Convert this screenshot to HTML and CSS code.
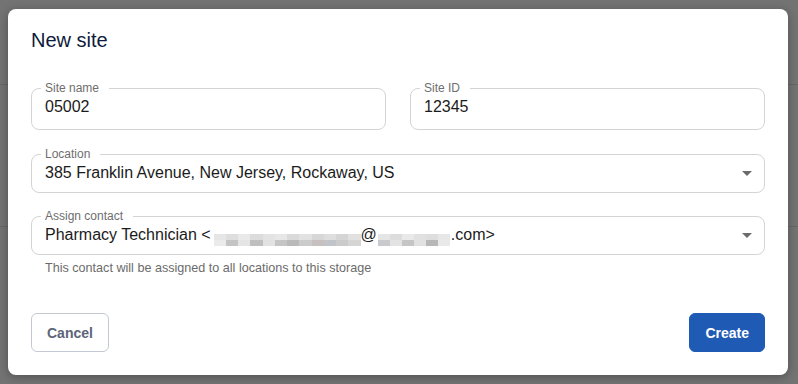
FILE: index.html
```html
<!DOCTYPE html>
<html lang="en">
<head>
<meta charset="utf-8">
<title>New site</title>
<link rel="stylesheet" href="styles.css">
</head>
<body>
<div class="dialog">
  <h2 class="title">New site</h2>
  <div class="row">
    <div class="field text">
      <span class="label">Site name</span>
      <span class="value">05002</span>
    </div>
    <div class="field text">
      <span class="label">Site ID</span>
      <span class="value">12345</span>
    </div>
  </div>
  <div class="field select loc">
    <span class="label">Location</span>
    <span class="value">385 Franklin Avenue, New Jersey, Rockaway, US</span>
    <svg class="arrow" width="10" height="5" viewBox="0 0 10 5"><path d="M0 0H10L5 5Z" fill="#6b6b6b"/></svg>
  </div>
  <div class="field select contact">
    <span class="label">Assign contact</span>
    <span class="value">Pharmacy Technician &lt;<span class="redact r12"><i style="background:#e6e6e6"></i><i style="background:#dedede"></i><i style="background:#e9e9e9"></i><i style="background:#dcdcdc"></i><i style="background:#e3e3e3"></i><i style="background:#e7e7e7"></i><i style="background:#dadada"></i><i style="background:#e2e2e2"></i><i style="background:#d7d7d7"></i><i style="background:#dedede"></i><i style="background:#d5d5d5"></i><i style="background:#e1e1e1"></i><i style="background:#ebebeb"></i><i style="background:#c4c4c4"></i><i style="background:#e5e5e5"></i><i style="background:#bfbfbf"></i><i style="background:#e2e2e2"></i><i style="background:#c5c5c5"></i><i style="background:#bababa"></i><i style="background:#cbcbcb"></i><i style="background:#c6c0c0"></i><i style="background:#c1c5c9"></i><i style="background:#cbcbcb"></i><i style="background:#d5d5d5"></i></span>@<span class="redact r6"><i style="background:#e5e5e5"></i><i style="background:#dddddd"></i><i style="background:#e9e9e9"></i><i style="background:#e1e1e1"></i><i style="background:#dedede"></i><i style="background:#e7e7e7"></i><i style="background:#c9c9ce"></i><i style="background:#e3e3e3"></i><i style="background:#c5c5c5"></i><i style="background:#e1e1e1"></i><i style="background:#b7b7b7"></i><i style="background:#e9e9e9"></i></span>.com&gt;</span>
    <svg class="arrow" width="10" height="5" viewBox="0 0 10 5"><path d="M0 0H10L5 5Z" fill="#6b6b6b"/></svg>
  </div>
  <p class="helper">This contact will be assigned to all locations to this storage</p>
  <div class="footer">
    <button class="btn cancel" type="button">Cancel</button>
    <button class="btn create" type="button">Create</button>
  </div>
</div>
</body>
</html>
```
FILE: styles.css
```css
html, body {
  margin: 0;
  padding: 0;
}
body {
  width: 798px;
  height: 384px;
  overflow: hidden;
  font-family: "Liberation Sans", Arial, sans-serif;
  background:
    linear-gradient(#666, #666) 0 84px / 100% 1px no-repeat,
    linear-gradient(#666, #666) 0 226px / 100% 1px no-repeat,
    #737373;
}
.dialog {
  box-sizing: border-box;
  width: 780px;
  height: 366px;
  margin: 9px 0 0 8px;
  padding: 19px 23px 23px;
  background: #fff;
  border-radius: 8px;
  box-shadow: 0 2px 10px rgba(0, 0, 0, 0.3);
  display: flex;
  flex-direction: column;
}
.title {
  margin: 0;
  font-size: 20px;
  line-height: 24px;
  font-weight: 400;
  color: #0e1b3c;
}
.row {
  display: grid;
  grid-template-columns: 1fr 1fr;
  column-gap: 24px;
  margin-top: 36px;
}
.field {
  position: relative;
  box-sizing: border-box;
  border: 1px solid #d4d4d4;
  border-radius: 8px;
  padding: 8px 12px 0 13px;
  display: flex;
  align-items: flex-start;
}
.field.text {
  height: 42px;
}
.field.select {
  height: 39px;
}
.field.loc {
  margin-top: 24px;
}
.field.contact {
  margin-top: 23px;
}
.label {
  position: absolute;
  top: -8px;
  left: 9px;
  padding: 0 10px 0 4px;
  background: #fff;
  font-size: 12px;
  line-height: 14px;
  color: #6e6e6e;
}
.value {
  flex: 1;
  font-size: 16px;
  line-height: 19px;
  color: #1b1b1b;
  white-space: nowrap;
}
.arrow {
  margin-top: 8px;
  flex: none;
}
.redact {
  display: inline-grid;
  grid-template-rows: 6px 6px;
  height: 12px;
  vertical-align: 0;
}
.redact.r12 {
  width: 147px;
  margin-left: 3px;
  grid-template-columns: repeat(12, 1fr);
}
.redact.r6 {
  width: 72px;
  margin-left: 1px;
  margin-right: 1px;
  grid-template-columns: repeat(6, 1fr);
}
.redact i {
  display: block;
}
.helper {
  margin: 5px 0 0 14px;
  font-size: 12.6px;
  line-height: 16px;
  color: #6b6b6b;
}
.footer {
  margin-top: auto;
  display: flex;
  justify-content: space-between;
}
.btn {
  box-sizing: border-box;
  height: 39px;
  padding: 0 15px;
  border-radius: 6px;
  font-family: "Liberation Sans", Arial, sans-serif;
  font-size: 14px;
  font-weight: 700;
  cursor: pointer;
}
.cancel {
  background: #fff;
  border: 1px solid #c4c9d4;
  color: #5c6579;
}
.create {
  background: #1f5ab4;
  border: 1px solid #1f5ab4;
  color: #fff;
}
```
